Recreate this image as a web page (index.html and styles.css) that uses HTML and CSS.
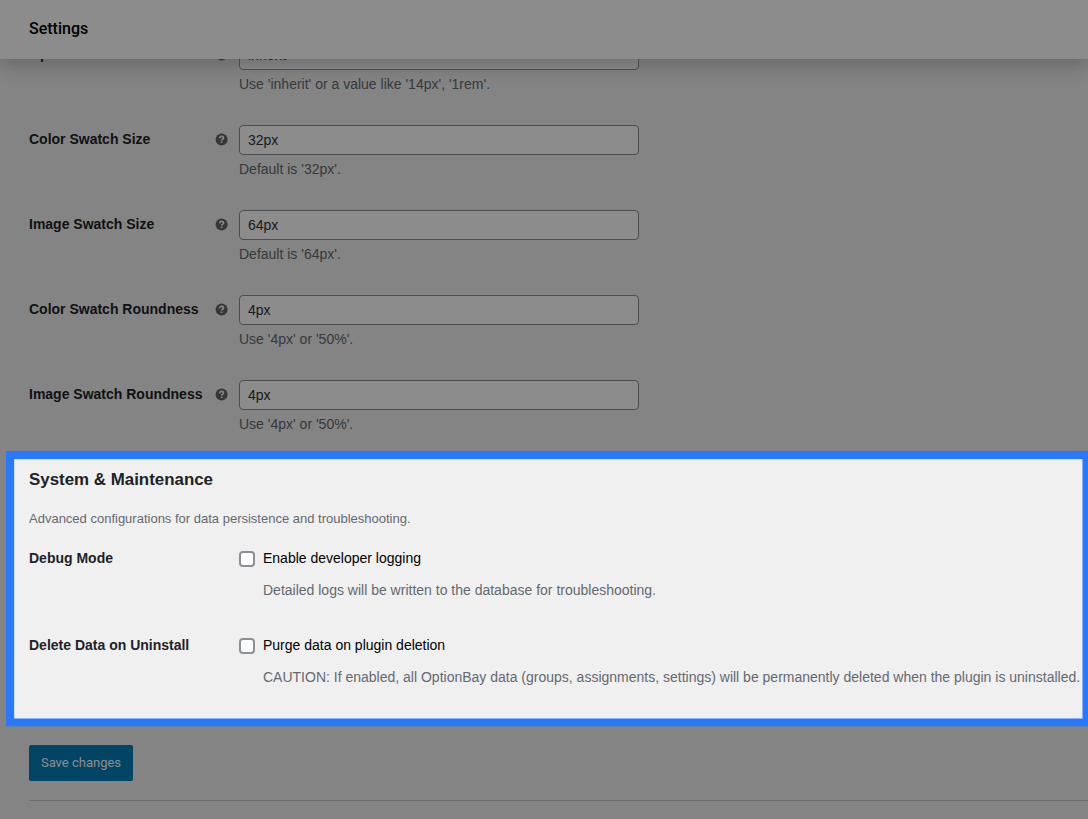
FILE: index.html
```html
<!DOCTYPE html>
<html lang="en">
<head>
    <meta charset="utf-8">
    <title>Settings</title>
    <meta name="viewport" content="width=device-width, initial-scale=1.0">
    <link rel="stylesheet" href="styles.css">
</head>
<body>
    <header class="page-header">
        <h1>Settings</h1>
    </header>

    <main class="content">
        <div class="field">
            <label for="optionSize">Option Font Size</label>
            <span class="help"><svg viewBox="-0.500 0 13 13"><circle cx="6.100" cy="6.500" r="6"/><path d="M4.200 5.200C4.300 3.900 5 3.400 6.100 3.400s1.900.6 1.900 1.600C8 6.300 6.100 6.100 6.100 7.500M6.100 8.500v1.500"/></svg></span>
            <div class="control">
                <input type="text" id="optionSize" value="inherit">
                <p class="description">Use 'inherit' or a value like '14px', '1rem'.</p>
            </div>
        </div>
        <div class="field">
            <label for="colorSize">Color Swatch Size</label>
            <span class="help"><svg viewBox="-0.500 0 13 13"><circle cx="6.100" cy="6.500" r="6"/><path d="M4.200 5.200C4.300 3.900 5 3.400 6.100 3.400s1.900.6 1.900 1.600C8 6.300 6.100 6.100 6.100 7.500M6.100 8.500v1.500"/></svg></span>
            <div class="control">
                <input type="text" id="colorSize" value="32px">
                <p class="description">Default is '32px'.</p>
            </div>
        </div>
        <div class="field">
            <label for="imageSize">Image Swatch Size</label>
            <span class="help"><svg viewBox="-0.500 0 13 13"><circle cx="6.100" cy="6.500" r="6"/><path d="M4.200 5.200C4.300 3.900 5 3.400 6.100 3.400s1.900.6 1.900 1.600C8 6.300 6.100 6.100 6.100 7.500M6.100 8.500v1.500"/></svg></span>
            <div class="control">
                <input type="text" id="imageSize" value="64px">
                <p class="description">Default is '64px'.</p>
            </div>
        </div>
        <div class="field">
            <label for="colorRound">Color Swatch Roundness</label>
            <span class="help"><svg viewBox="-0.500 0 13 13"><circle cx="6.100" cy="6.500" r="6"/><path d="M4.200 5.200C4.300 3.900 5 3.400 6.100 3.400s1.900.6 1.900 1.600C8 6.300 6.100 6.100 6.100 7.500M6.100 8.500v1.500"/></svg></span>
            <div class="control">
                <input type="text" id="colorRound" value="4px">
                <p class="description">Use '4px' or '50%'.</p>
            </div>
        </div>
        <div class="field">
            <label for="imageRound">Image Swatch Roundness</label>
            <span class="help"><svg viewBox="-0.500 0 13 13"><circle cx="6.100" cy="6.500" r="6"/><path d="M4.200 5.200C4.300 3.900 5 3.400 6.100 3.400s1.900.6 1.900 1.600C8 6.300 6.100 6.100 6.100 7.500M6.100 8.500v1.500"/></svg></span>
            <div class="control">
                <input type="text" id="imageRound" value="4px">
                <p class="description">Use '4px' or '50%'.</p>
            </div>
        </div>

        <section class="system">
            <h2>System &amp; Maintenance</h2>
            <p class="intro">Advanced configurations for data persistence and troubleshooting.</p>
            <div class="option">
                <span class="option-title">Debug Mode</span>
                <div>
                    <label class="check"><input type="checkbox">Enable developer logging</label>
                    <p class="description">Detailed logs will be written to the database for troubleshooting.</p>
                </div>
            </div>
            <div class="option">
                <span class="option-title">Delete Data on Uninstall</span>
                <div>
                    <label class="check"><input type="checkbox">Purge data on plugin deletion</label>
                    <p class="description">CAUTION: If enabled, all OptionBay data (groups, assignments, settings) will be permanently deleted when the plugin is uninstalled.</p>
                </div>
            </div>
            <div class="spotlight"></div>
        </section>

        <button class="save">Save changes</button>
        <hr>
    </main>
</body>
</html>
```
FILE: styles.css
```css
* {
    box-sizing: border-box;
    margin: 0;
    padding: 0;
}

body {
    height: 819px;
    overflow: hidden;
    background: #f0f0f0;
    color: #1d2327;
    font-family: "Liberation Sans", Arial, sans-serif;
    font-size: 14px;
    line-height: 20px;
}

.page-header {
    position: relative;
    z-index: 1;
    height: 59px;
    padding: 19px 29px;
    background: #fff;
    box-shadow: 0 8px 16px 0 rgba(85, 93, 102, 0.3);
}

.page-header h1 {
    font: 500 16px/20px Roboto, sans-serif;
    color: #000;
}

/* content is scrolled slightly under the header */
.content {
    margin-top: -19px;
    padding-left: 29px;
}

.field {
    display: grid;
    grid-template-columns: 186px 24px 400px;
    height: 85px;
}

.field label {
    padding-top: 4px;
    font-weight: bold;
}

.help {
    padding-top: 8px;
}

.help svg {
    display: block;
    width: 13px;
    height: 13px;
}

.help circle {
    fill: #646464;
}

.help path {
    fill: none;
    stroke: #f0f0f0;
    stroke-width: 1.7;
}

.control input {
    display: block;
    width: 400px;
    height: 30px;
    padding: 0 8px;
    border: 1px solid #8c8f94;
    border-radius: 4px;
    background: #fff;
    color: #2c3338;
    font: inherit;
}

.description {
    color: #646970;
    white-space: nowrap;
}

.control .description {
    margin-top: 4px;
}

.system {
    position: relative;
    height: 280px;
    padding-top: 5px;
}

.system h2 {
    font-size: 16.9px;
    line-height: 20px;
}

.intro {
    margin-top: 19px;
    color: #646970;
    font-size: 13px;
    line-height: 20px;
}

.option {
    display: grid;
    grid-template-columns: 210px 1fr;
    height: 87px;
    padding-top: 19px;
}

.option-title {
    font-weight: bold;
}

.check {
    display: flex;
    gap: 8px;
    color: #000;
}

.check input {
    appearance: none;
    width: 16px;
    height: 16px;
    margin-top: 3px;
    border: 2px solid #8c8f94;
    border-radius: 4px;
    background: #fff;
}

.option .description {
    margin: 12px 0 0 24px;
}

/* dims everything outside the highlighted section */
.spotlight {
    position: absolute;
    z-index: 2;
    top: -14px;
    left: -23px;
    width: 1085px;
    height: 275px;
    border: 8px solid #2979ff;
    border-bottom-width: 7px;
    box-shadow: inset 1px 1px 0 rgba(41, 121, 255, 0.15),
        inset -1px -1px 0 rgba(41, 121, 255, 0.5),
        0 1px 0 rgba(41, 121, 255, 0.3),
        0 0 0 1200px rgba(0, 0, 0, 0.45);
    pointer-events: none;
}

.save {
    display: block;
    width: 104px;
    height: 36px;
    border: none;
    border-radius: 2px;
    background: #007cba;
    color: #fff;
    font: 13px/36px Roboto, sans-serif;
}

hr {
    margin-top: 19px;
    border: none;
    border-top: 1px solid #c3c4c7;
}
```
